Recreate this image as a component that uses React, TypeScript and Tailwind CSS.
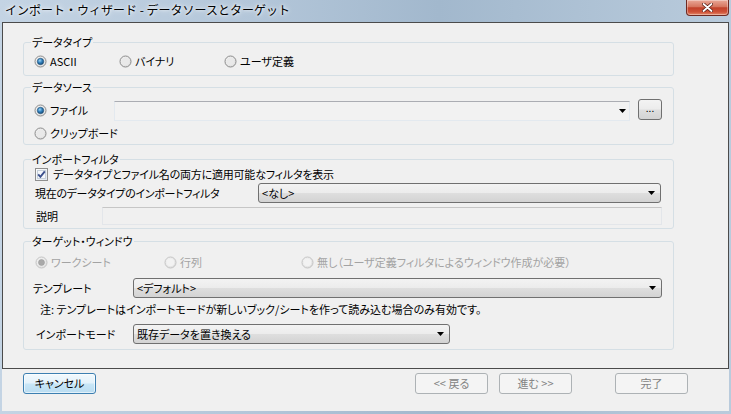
import { ReactNode } from "react";

const Radio = ({ checked, disabled }: { checked?: boolean; disabled?: boolean }) => (
  <svg width="13" height="13" viewBox="0 0 13 13" className="shrink-0">
    <defs>
      <linearGradient id="rb-ring" x1="0" y1="0" x2="1" y2="1">
        <stop offset="0" stopColor="#f4f4f4" />
        <stop offset="1" stopColor="#dcdcdc" />
      </linearGradient>
      <radialGradient id="rb-dot" cx="0.4" cy="0.35" r="0.7">
        <stop offset="0" stopColor="#9fd6f5" />
        <stop offset="0.5" stopColor="#2f7fbd" />
        <stop offset="1" stopColor="#15466f" />
      </radialGradient>
    </defs>
    <circle cx="6.5" cy="6.5" r="5.5" fill="url(#rb-ring)" stroke={disabled ? "#c4c4c4" : "#8b8b8b"} />
    <circle cx="6.5" cy="6.5" r="3.8" fill={disabled ? "#f2f2f2" : "#e9e9e9"} />
    {checked && !disabled && <circle cx="6.5" cy="6.5" r="3.2" fill="url(#rb-dot)" stroke="#1d4e75" strokeWidth="0.6" />}
    {checked && disabled && <circle cx="6.5" cy="6.5" r="3" fill="#a9a9a9" stroke="#9a9a9a" strokeWidth="0.6" />}
  </svg>
);

const Check = () => (
  <svg width="13" height="13" viewBox="0 0 13 13" className="shrink-0">
    <defs>
      <linearGradient id="cb-bg" x1="0" y1="0" x2="1" y2="1">
        <stop offset="0" stopColor="#ffffff" />
        <stop offset="1" stopColor="#dfe6ee" />
      </linearGradient>
    </defs>
    <rect x="0.5" y="0.5" width="12" height="12" fill="url(#cb-bg)" stroke="#8f8f8f" />
    <rect x="2.5" y="2.5" width="8" height="8" fill="#f4f7fb" stroke="#c6d0da" />
    <path d="M3.2 6.4 L5.4 8.8 L9.8 3.4" fill="none" stroke="#3a4f8c" strokeWidth="1.9" />
  </svg>
);

const Arrow = () => (
  <svg width="7" height="4" viewBox="0 0 7 4" className="shrink-0">
    <polygon points="0,0 7,0 3.5,4" fill="#000" />
  </svg>
);

const Combo = ({ text, className }: { text?: string; className: string }) => (
  <div
    className={`flex h-[20px] items-center justify-between rounded-[3px] border border-[#707070] bg-[linear-gradient(180deg,#f3f3f3_0%,#ececec_48%,#dedede_52%,#d3d3d3_100%)] pl-[3px] pr-[5px] ${className}`}
  >
    <span className="leading-[16px]">{text}</span>
    <Arrow />
  </div>
);

const Group = ({ title, className, children }: { title: string; className?: string; children: ReactNode }) => (
  <fieldset className={`w-[651px] rounded-[3px] border border-[#d5dfe5] px-[7px] ${className ?? ""}`}>
    <legend className="px-[1px] leading-[14px]">{title}</legend>
    {children}
  </fieldset>
);

const Opt = ({ label, checked, disabled, className }: { label: string; checked?: boolean; disabled?: boolean; className?: string }) => (
  <div className={`flex h-[16px] items-center gap-[3px] ${className ?? ""}`}>
    <Radio checked={checked} disabled={disabled} />
    <span className={`leading-[16px] ${disabled ? "text-[#a3a3a3]" : ""}`}>{label}</span>
  </div>
);

const DisabledButton = ({ label, className }: { label: string; className?: string }) => (
  <div
    className={`flex h-[21px] w-[73px] items-center justify-center rounded-[3px] border border-[#adb2b5] bg-[#f4f4f4] text-[#838383] ${className ?? ""}`}
  >
    {label}
  </div>
);

export default function App() {
  return (
    <div className="flex h-[414px] w-[731px] flex-col overflow-hidden bg-[linear-gradient(90deg,#c4d4e4_0%,#b3c6d9_35%,#a2b8cd_60%,#b9cbdc_100%)] font-['Noto_Sans_CJK_JP','Noto_Sans',sans-serif] text-[11px] text-black [font-feature-settings:'palt']">
      {/* title bar */}
      <div className="flex h-[22px] shrink-0 items-start justify-between">
        <span className="pl-[5px] pt-[2px] text-[12px] leading-[15px] [font-feature-settings:normal] [text-shadow:0_0_6px_#fff,0_0_3px_#fff]">
          インポート・ウィザード - データソースとターゲット
        </span>
        <div className="mr-[2px] flex h-[16px] w-[43px] items-center justify-center rounded-b-[4px] border border-t-0 border-[#6e2a22] bg-[linear-gradient(180deg,#e9a898_0%,#d6765f_45%,#c1412a_52%,#cf5238_80%,#e48c6d_100%)] shadow-[inset_0_0_0_1px_rgba(255,255,255,0.35)]">
          <svg width="11" height="9" viewBox="0 0 11 9">
            <path d="M1.5 1 L9.5 8 M9.5 1 L1.5 8" stroke="#5a2018" strokeWidth="3.4" strokeLinecap="round" />
            <path d="M1.5 1 L9.5 8 M9.5 1 L1.5 8" stroke="#fff" strokeWidth="1.8" strokeLinecap="round" />
          </svg>
        </div>
      </div>

      <div className="mx-[2px] mb-[3px] flex flex-1 flex-col bg-[#f0f0f0]">
        <div className="flex h-[347px] shrink-0 flex-col border border-[#4b4b4b] pl-[20px] pt-[12px]">
          <Group title="データタイプ" className="pb-[6px] pt-[4px]">
            <div className="ml-[3px] flex h-[16px] items-center">
              <Opt label="ASCII" checked className="w-[85px]" />
              <Opt label="バイナリ" className="w-[105px]" />
              <Opt label="ユーザ定義" />
            </div>
          </Group>

          <Group title="データソース" className="mt-[4px] pb-[3px] pt-[5px]">
            <div className="ml-[3px] flex h-[22px] items-start">
              <Opt label="ファイル" checked className="mt-[3px] w-[80px]" />
              <div className="mt-[2px] flex h-[20px] w-[516px] items-center justify-end border border-[#e3e9ef] border-t-[#abadb3] bg-[#f2f2f2] pr-[3px]">
                <Arrow />
              </div>
              <div className="ml-[8px] flex h-[21px] w-[24px] items-center justify-center rounded-[3px] border border-[#707070] bg-[linear-gradient(180deg,#f3f3f3_0%,#ececec_48%,#dedede_52%,#d3d3d3_100%)] pb-[3px] text-[10px] leading-[10px]">
                ...
              </div>
            </div>
            <Opt label="クリップボード" className="ml-[3px] mt-[4px]" />
          </Group>

          <Group title="インポートフィルタ" className="mt-[7px] pb-[3px]">
            <div className="ml-[4px] flex h-[16px] items-center gap-[5px]">
              <Check />
              <span className="leading-[16px] tracking-[-0.2px]">データタイプとファイル名の両方に適用可能なフィルタを表示</span>
            </div>
            <div className="ml-[4px] mt-[1px] flex h-[20px] items-center">
              <span className="w-[223px] leading-[16px] tracking-[-0.3px]">現在のデータタイプのインポートフィルタ</span>
              <Combo text="<なし>" className="w-[403px]" />
            </div>
            <div className="ml-[5px] mt-[4px] flex h-[18px] items-center">
              <span className="w-[66px] leading-[16px]">説明</span>
              <div className="h-[18px] w-[560px] border border-[#e3e6ea] border-t-[#c6c6c6] bg-[#f0f0f0]" />
            </div>
          </Group>

          <Group title="ターゲット・ウィンドウ" className="mt-[5px] pb-[5px] pt-[6px]">
            <div className="ml-[4px] flex h-[16px] items-center">
              <Opt label="ワークシート" checked disabled className="w-[129px]" />
              <Opt label="行列" disabled className="w-[137px]" />
              <Opt label="無し（ユーザ定義フィルタによるウィンドウ作成が必要）" disabled />
            </div>
            <div className="ml-[2px] mt-[8px] flex h-[20px] items-center">
              <span className="w-[100px] leading-[16px]">テンプレート</span>
              <Combo text="<デフォルト>" className="w-[529px]" />
            </div>
            <div className="ml-[9px] mt-[3px] flex h-[16px] items-center leading-[16px]">
              注: テンプレートはインポートモードが新しいブック/シートを作って読み込む場合のみ有効です。
            </div>
            <div className="ml-[5px] mt-[7px] flex h-[20px] items-center">
              <span className="w-[97px] leading-[16px]">インポートモード</span>
              <Combo text="既存データを置き換える" className="w-[317px]" />
            </div>
          </Group>
        </div>

        <div className="flex pl-[21px] pt-[4px]">
          <div className="flex h-[21px] w-[73px] items-center justify-center rounded-[3px] border border-[#3c7fb1] bg-[linear-gradient(180deg,#f2f9fd_0%,#e3f2fb_48%,#c8e6f7_52%,#b9dcf1_100%)] shadow-[inset_0_0_0_1px_rgba(255,255,255,0.6)]">
            キャンセル
          </div>
          <DisabledButton label="<< 戻る" className="ml-[319px]" />
          <DisabledButton label="進む >>" className="ml-[11px]" />
          <DisabledButton label="完了" className="ml-[43px]" />
        </div>
      </div>
    </div>
  );
}
